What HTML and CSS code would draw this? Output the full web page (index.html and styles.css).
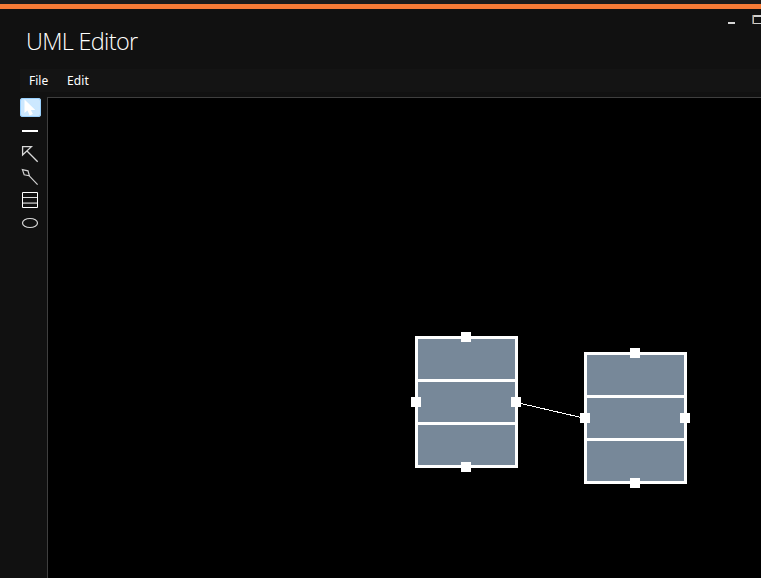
FILE: index.html
```html
<!DOCTYPE html>
<html lang="en">
<head>
<meta charset="utf-8">
<title>UML Editor</title>
<link rel="stylesheet" href="styles.css">
</head>
<body>
<div class="window">
  <div class="accent"></div>
  <header class="titlebar">
    <h1 class="title">UML Editor</h1>
    <svg class="controls" width="40" height="20" viewBox="0 0 40 20" shape-rendering="crispEdges">
      <path d="M7 13h7v2H7z" fill="#d6d6d6"/>
      <path d="M31 6h9v2h-9zM31 14h9v1h-9z" fill="#d0d0d0"/>
      <path d="M31 6h1v9h-1z" fill="#5f7d99"/>
      <path d="M32 6h1v9h-1z" fill="#d0b490"/>
    </svg>
  </header>
  <nav class="menu">
    <span class="item file">File</span>
    <span class="item edit">Edit</span>
  </nav>
  <main class="body">
    <aside class="tools">
      <div class="tool selected">
        <svg width="21" height="19" viewBox="0 0 21 19"><path d="M4.5 1.5v13.5l3-2.5 2.2 5 3.2-1.4-2-4.2h4.4z" fill="#fff"/></svg>
      </div>
      <div class="tool">
        <svg width="21" height="19" viewBox="0 0 21 19"><path d="M2 9h16v2H2z" fill="#fff"/></svg>
      </div>
      <div class="tool">
        <svg width="21" height="19" viewBox="0 0 21 19" fill="none" stroke="#d8d8d8" stroke-width="1.3"><path d="M2.6 2.6h8.8l-8.8 8.4zM7 7l10.7 10.7"/></svg>
      </div>
      <div class="tool">
        <svg width="21" height="19" viewBox="0 0 21 19" fill="none" stroke="#d0d0d0" stroke-width="1.2"><path d="M2.4 2.6l5.6 1.2 1.4 5-5.2-1zM9 8.6l8.6 9"/></svg>
      </div>
      <div class="tool">
        <svg width="21" height="19" viewBox="0 0 21 19" fill="none" stroke="#fff"><path d="M2.5 2.5h15v15h-15z"/><path d="M3 7.5h14" stroke="#ddd"/><path d="M3 12.5h14" stroke="#777"/><path d="M3 13.5h14" stroke="#999"/></svg>
      </div>
      <div class="tool">
        <svg width="21" height="19" viewBox="0 0 21 19" fill="none" stroke="#d8d8d8" stroke-width="1.2"><ellipse cx="10" cy="10" rx="7.5" ry="4.5"/></svg>
      </div>
    </aside>
    <section class="canvas">
      <svg class="link" width="713" height="480" viewBox="48 98 713 480" shape-rendering="crispEdges"><path d="M516.5 402.5L585.5 418.5" stroke="#fff"/></svg>
      <div class="node first">
        <div></div><div></div><div></div>
        <i class="handle top"></i><i class="handle right"></i><i class="handle bottom"></i><i class="handle left"></i>
      </div>
      <div class="node second">
        <div></div><div></div><div></div>
        <i class="handle top"></i><i class="handle right"></i><i class="handle bottom"></i><i class="handle left"></i>
      </div>
    </section>
  </main>
</div>
</body>
</html>
```
FILE: styles.css
```css
* { box-sizing: border-box; }
body {
  margin: 0;
  background: #111;
  color: #fff;
  font-family: "Open Sans", "Noto Sans", sans-serif;
  overflow: hidden;
}
.window {
  display: flex;
  flex-direction: column;
  height: 578px;
  border-top: 4px solid #1c1c1c;
}
.accent { height: 5px; background: #f77b36; }
.titlebar {
  display: flex;
  justify-content: space-between;
  height: 60px;
  padding-left: 26px;
}
.title {
  margin: 15px 0 0;
  font-size: 23.5px;
  font-weight: 300;
  line-height: 34px;
  letter-spacing: -0.7px;
}
.controls { display: block; width: 40px; }
.menu {
  display: flex;
  height: 23px;
  margin-left: 20px;
  padding-left: 9px;
  background: #141414;
  font-family: "Noto Sans", sans-serif;
  font-size: 12px;
  line-height: 23px;
}
.file { width: 38px; }
.edit { letter-spacing: 0.15px; }
.body { display: flex; flex: 1; padding-top: 5px; }
.tools {
  display: flex;
  flex-direction: column;
  gap: 4px;
  width: 47px;
  padding: 1px 0 0 20px;
}
.tool { width: 21px; height: 19px; }
.tool svg { display: block; }
.selected {
  background: #cce8ff;
  border-radius: 3px;
  box-shadow: inset 0 0 0 1px #99d1ff;
}
.canvas {
  position: relative;
  flex: 1;
  background: #000;
  border-left: 1px solid #3f3f3f;
  border-top: 1px solid #3f3f3f;
}
.link { position: absolute; left: 0; top: 0; }
.node {
  position: absolute;
  display: grid;
  grid-template-rows: repeat(3, 40px);
  gap: 3px;
  width: 103px;
  height: 132px;
  padding: 3px;
  background: #fff;
}
.node div { background: #778899; }
.first { left: 367px; top: 238px; }
.second { left: 536px; top: 254px; }
.handle { position: absolute; width: 10px; height: 10px; background: #fff; }
.top { left: 46px; top: -4px; }
.right { left: 96px; top: 61px; }
.bottom { left: 46px; top: 126px; }
.left { left: -4px; top: 61px; }
```
